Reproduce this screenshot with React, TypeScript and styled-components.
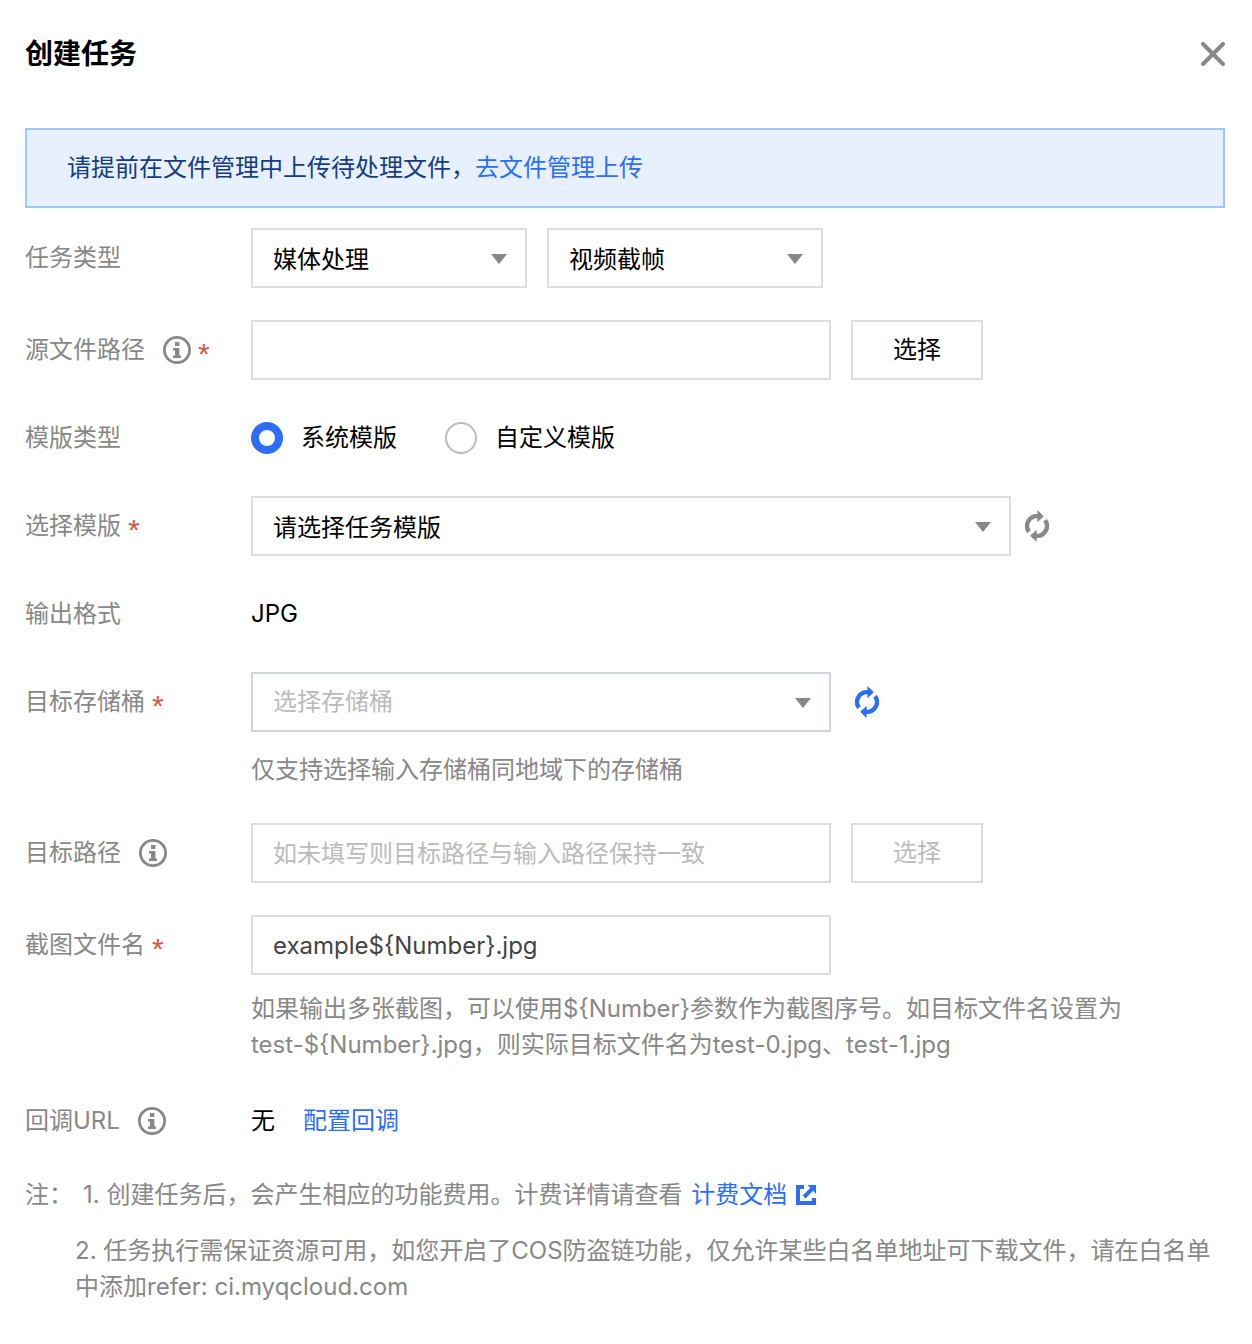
import React from 'react';
import styled, { createGlobalStyle } from 'styled-components';

const color = {
  text: '#000',
  muted: '#888',
  faint: '#bbb',
  line: '#ddd',
  link: '#2c6ef8',
  danger: '#d4574c',
};

const GlobalStyle = createGlobalStyle`
  *, *::before, *::after { box-sizing: border-box; }
  body {
    margin: 0;
    background: #fff;
  }
  body, input, select, button {
    font-family: Inter, "Noto Sans CJK SC", sans-serif;
    font-size: 24px;
    line-height: 36px;
    color: ${color.text};
  }
`;

const Dialog = styled.main`
  padding: 36px 27px 36px 25px;
`;

const Header = styled.header`
  display: flex;
  align-items: center;
  justify-content: space-between;
  margin-bottom: 56px;
`;

const Title = styled.h1`
  margin: 0;
  font-size: 28px;
  line-height: 36px;
  font-weight: 700;
`;

const IconButton = styled.button<{ $color?: string }>`
  display: flex;
  align-items: center;
  justify-content: center;
  flex: none;
  padding: 0;
  border: 0;
  background: none;
  color: ${(p) => p.$color ?? color.muted};
  cursor: pointer;
`;

const RefreshButton = styled(IconButton)`
  width: 32px;
  height: 32px;
`;

const Alert = styled.div`
  padding: 20px 40px;
  border: 2px solid #9fc6f8;
  background: #e6f0ff;
  color: #173c7f;
  margin-bottom: 20px;
`;

const Link = styled.a`
  color: ${color.link};
  text-decoration: none;
`;

const DocLink = styled(Link)`
  margin-left: 2px;
`;

const Form = styled.form`
  display: flex;
  flex-direction: column;
  gap: 32px;
`;

const Row = styled.div<{ $plain?: boolean }>`
  display: grid;
  grid-template-columns: 226px minmax(0, 1fr);
  --line: ${(p) => (p.$plain ? '52px' : '60px')};
`;

const LabelCell = styled.div`
  display: flex;
  align-items: center;
  height: var(--line);
  color: ${color.muted};
`;

const InfoSlot = styled.span`
  display: flex;
  margin-left: 18px;
`;

const Star = styled.span`
  margin-left: 7px;
  padding-top: 8px;
  font-family: "Liberation Sans", sans-serif;
  font-size: 30px;
  line-height: 28px;
  color: ${color.danger};
`;

const Controls = styled.div<{ $gap?: number }>`
  display: flex;
  align-items: center;
  gap: ${(p) => p.$gap ?? 20}px;
  min-height: var(--line);
`;

const TextInput = styled.input`
  width: 580px;
  height: 60px;
  padding: 0 20px;
  border: 2px solid ${color.line};
  border-radius: 0;
  background: #fff;
  color: #444;
  outline: none;
  &::placeholder { color: ${color.faint}; opacity: 1; }
`;

const PickButton = styled.button`
  width: 132px;
  height: 60px;
  padding: 0;
  border: 2px solid ${color.line};
  background: #fff;
  &:disabled { color: ${color.faint}; }
`;

const SelectBox = styled.div<{ $width: number }>`
  position: relative;
  width: ${(p) => p.$width}px;
`;

const NativeSelect = styled.select<{ $placeholder?: boolean }>`
  appearance: none;
  display: block;
  width: 100%;
  height: 60px;
  padding: ${(p) => (p.$placeholder ? 0 : 3)}px 48px 0 20px;
  border: 2px solid ${(p) => (p.$placeholder ? '#cfd5e0' : color.line)};
  border-radius: 0;
  background: #fff;
  color: ${(p) => (p.$placeholder ? color.faint : color.text)};
  outline: none;
`;

const Caret = styled.svg`
  position: absolute;
  right: 20px;
  top: 26px;
  pointer-events: none;
`;

const Hint = styled.p<{ $line?: number }>`
  max-width: 880px;
  margin: 16px 0 0;
  line-height: ${(p) => p.$line ?? 36}px;
  color: ${color.muted};
`;

const RadioLabel = styled.label`
  display: flex;
  align-items: center;
  gap: 18px;
`;

const Radio = styled.input`
  appearance: none;
  width: 32px;
  height: 32px;
  margin: 0;
  border: 2px solid ${color.faint};
  border-radius: 50%;
  background: #fff;
  &:checked { border: 8px solid ${color.link}; }
`;

const Notes = styled.section`
  display: flex;
  margin-top: 30px;
  color: ${color.muted};
`;

const NotesTitle = styled.div`
  flex: none;
  width: 50px;
  white-space: nowrap;
`;

const NoteList = styled.div`
  display: flex;
  flex-direction: column;
  gap: 20px;
  min-width: 0;
`;

const Note = styled.p<{ $first?: boolean }>`
  margin: 0;
  padding-left: ${(p) => (p.$first ? 8 : 0)}px;
`;

const ExternalSvg = styled.svg`
  margin-left: 9px;
  vertical-align: -2px;
`;

function InfoIcon() {
  return (
    <InfoSlot>
      <svg width="28" height="28" viewBox="0 0 28 28" fill="#888" aria-hidden="true">
        <circle cx="14" cy="14" r="12.6" fill="none" stroke="#888" strokeWidth="2.8" />
        <path d="M12 6h4.4v4H12z M10 12h6.4v7.6H18V22h-8v-2.4h2v-5.2h-2z" />
      </svg>
    </InfoSlot>
  );
}

function RefreshIcon() {
  return (
    <svg width="24" height="32" viewBox="0 0 24 32" aria-hidden="true">
      <g fill="none" stroke="currentColor" strokeWidth="4.4">
        <path d="M13.5 6.3A9.8 9.8 0 0 0 4 21.8" />
        <path d="M10.5 25.7A9.8 9.8 0 0 0 20 10.2" />
      </g>
      <path fill="currentColor" d="M12.4 0l6.4 6.2-6.4 6z M11.6 32l-6.4-6.2 6.4-6z" />
    </svg>
  );
}

function ExternalIcon() {
  return (
    <ExternalSvg width="20" height="20" viewBox="0 0 20 20" fill={color.link} aria-hidden="true">
      <path d="M0 0h8v4H4v12h12v-3h4v7H0z M11.5 0H20v8.8l-3-3-7.4 7.8-3-3L14.2 3z" />
    </ExternalSvg>
  );
}

type FieldProps = {
  label: string;
  htmlFor?: string;
  info?: boolean;
  required?: boolean;
  plain?: boolean;
  children: React.ReactNode;
};

function Field({ label, htmlFor, info, required, plain, children }: FieldProps) {
  return (
    <Row $plain={plain}>
      <LabelCell>
        {htmlFor ? <label htmlFor={htmlFor}>{label}</label> : <span>{label}</span>}
        {info && <InfoIcon />}
        {required && <Star>*</Star>}
      </LabelCell>
      <div>{children}</div>
    </Row>
  );
}

type SelectProps = {
  id: string;
  width: number;
  value: string;
  placeholder?: boolean;
  ariaLabel?: string;
};

function Select({ id, width, value, placeholder, ariaLabel }: SelectProps) {
  return (
    <SelectBox $width={width}>
      <NativeSelect id={id} aria-label={ariaLabel} $placeholder={placeholder}>
        <option>{value}</option>
      </NativeSelect>
      <Caret width="16" height="10" viewBox="0 0 16 10" aria-hidden="true">
        <path d="M0 0h16L8 10z" fill="#888" />
      </Caret>
    </SelectBox>
  );
}

export default function App() {
  return (
    <>
      <GlobalStyle />
      <Dialog lang="zh-CN">
        <Header>
          <Title>创建任务</Title>
          <IconButton type="button" aria-label="关闭">
            <svg width="24" height="24" viewBox="0 0 24 24" aria-hidden="true">
              <path d="M2 2l20 20M22 2L2 22" stroke="currentColor" strokeWidth="4" strokeLinecap="round" />
            </svg>
          </IconButton>
        </Header>

        <Alert>
          请提前在文件管理中上传待处理文件，<Link href="#files">去文件管理上传</Link>
        </Alert>

        <Form onSubmit={(e) => e.preventDefault()}>
          <Field label="任务类型" htmlFor="task-type">
            <Controls>
              <Select id="task-type" width={276} value="媒体处理" />
              <Select id="task-subtype" width={276} value="视频截帧" ariaLabel="任务子类型" />
            </Controls>
          </Field>

          <Field label="源文件路径" htmlFor="source" info required>
            <Controls>
              <TextInput id="source" type="text" />
              <PickButton type="button">选择</PickButton>
            </Controls>
          </Field>

          <Field label="模版类型" plain>
            <Controls $gap={48} role="radiogroup" aria-label="模版类型">
              <RadioLabel>
                <Radio type="radio" name="template-kind" defaultChecked />
                系统模版
              </RadioLabel>
              <RadioLabel>
                <Radio type="radio" name="template-kind" />
                自定义模版
              </RadioLabel>
            </Controls>
          </Field>

          <Field label="选择模版" htmlFor="template" required>
            <Controls $gap={10}>
              <Select id="template" width={760} value="请选择任务模版" />
              <RefreshButton type="button" aria-label="刷新模版">
                <RefreshIcon />
              </RefreshButton>
            </Controls>
          </Field>

          <Field label="输出格式" plain>
            <Controls>JPG</Controls>
          </Field>

          <Field label="目标存储桶" htmlFor="bucket" required>
            <Controls>
              <Select id="bucket" width={580} value="选择存储桶" placeholder />
              <RefreshButton type="button" aria-label="刷新存储桶" $color={color.link}>
                <RefreshIcon />
              </RefreshButton>
            </Controls>
            <Hint $line={43}>仅支持选择输入存储桶同地域下的存储桶</Hint>
          </Field>

          <Field label="目标路径" htmlFor="target" info>
            <Controls>
              <TextInput id="target" type="text" placeholder="如未填写则目标路径与输入路径保持一致" />
              <PickButton type="button" disabled>选择</PickButton>
            </Controls>
          </Field>

          <Field label="截图文件名" htmlFor="filename" required>
            <Controls>
              <TextInput id="filename" type="text" defaultValue="example${Number}.jpg" />
            </Controls>
            <Hint>
              {'如果输出多张截图，可以使用${Number}参数作为截图序号。如目标文件名设置为test-${Number}.jpg，则实际目标文件名为test-0.jpg、test-1.jpg'}
            </Hint>
          </Field>

          <Field label="回调URL" info plain>
            <Controls $gap={28}>
              <span>无</span>
              <Link href="#callback">配置回调</Link>
            </Controls>
          </Field>
        </Form>

        <Notes>
          <NotesTitle>注：</NotesTitle>
          <NoteList>
            <Note $first>
              1. 创建任务后，会产生相应的功能费用。计费详情请查看{' '}
              <DocLink href="#billing">
                计费文档
                <ExternalIcon />
              </DocLink>
            </Note>
            <Note>
              2. 任务执行需保证资源可用，如您开启了COS防盗链功能，仅允许某些白名单地址可下载文件，请在白名单中添加refer: ci.myqcloud.com
            </Note>
          </NoteList>
        </Notes>
      </Dialog>
    </>
  );
}
